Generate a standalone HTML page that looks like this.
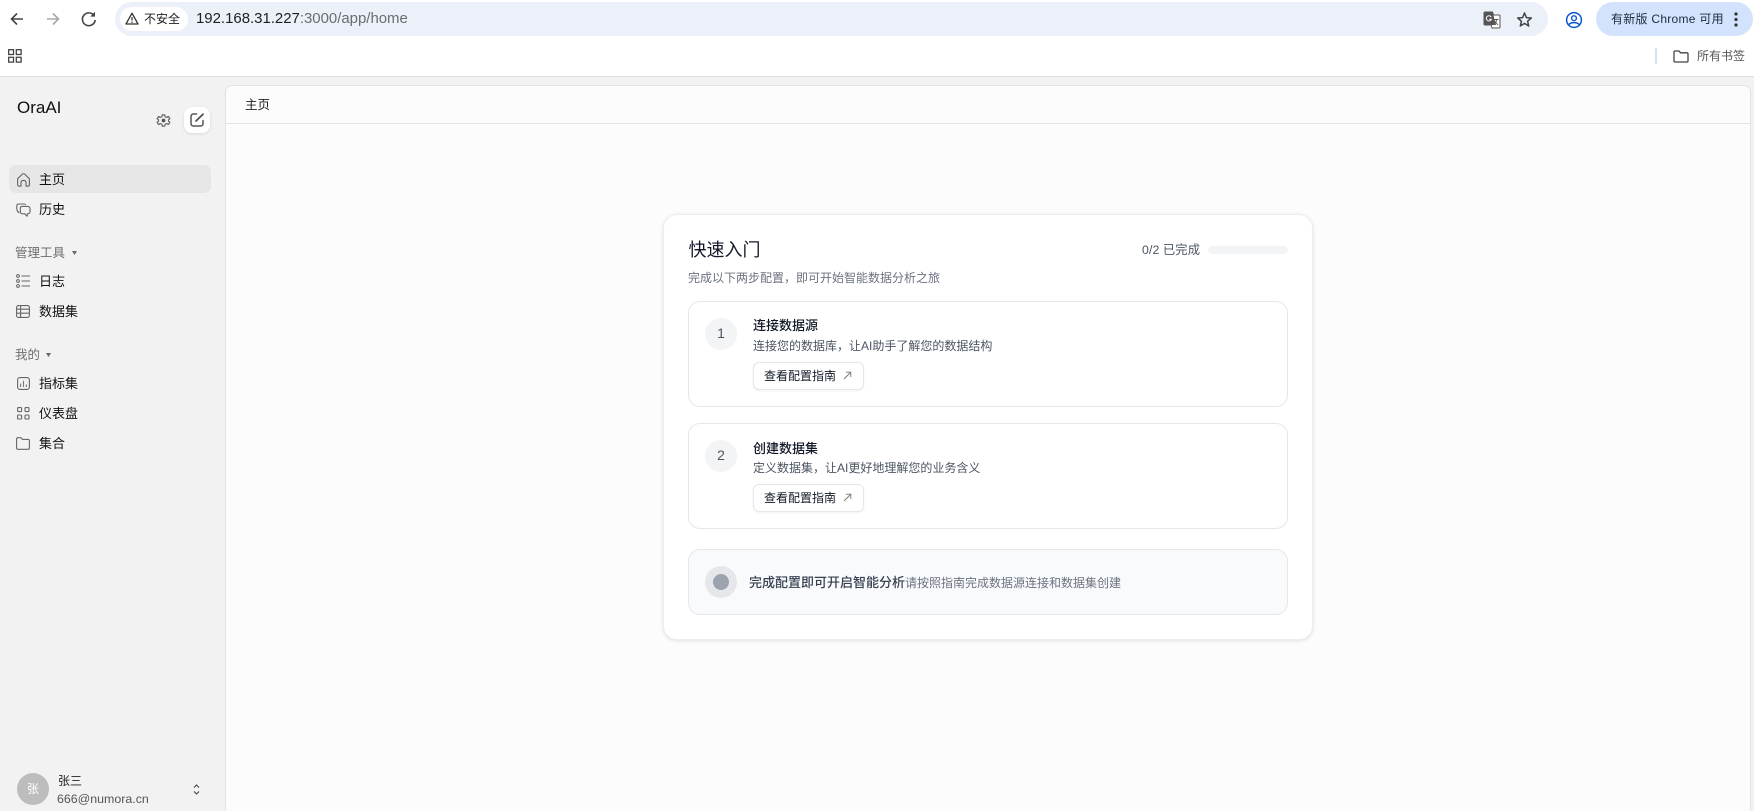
<!DOCTYPE html>
<html lang="zh">
<head>
<meta charset="utf-8">
<title>OraAI</title>
<style>
html,body{margin:0;padding:0;width:1754px;height:811px;overflow:hidden;background:#f2f2f2;font-family:"Liberation Sans","Noto Sans CJK SC",sans-serif;}
#root{position:relative;width:1754px;height:811px;overflow:hidden;background:#f2f2f2;}
.a{position:absolute;box-sizing:border-box;}
.t{position:absolute;white-space:nowrap;line-height:20px;height:20px;}
svg{position:absolute;overflow:visible;fill:none;}
.nav{font-size:13px;color:#111;left:39px;}
.grp{font-size:12.5px;color:#6f6f6f;left:15px;}
.step{left:688px;width:600px;height:106px;background:#fff;border:1px solid #e5e7eb;border-radius:12px;}
.num{left:705px;width:32px;height:32px;border-radius:50%;background:#f3f4f6;color:#4b5563;font-size:14px;line-height:30px;text-align:center;}
.st{left:753px;font-size:13px;color:#111827;font-weight:500;}
.sd{left:753px;font-size:12px;color:#4b5563;}
.btn{left:753px;width:111px;height:28px;background:#fff;border:1px solid #e5e7eb;border-radius:6px;box-shadow:0 1px 2px rgba(0,0,0,.05);}
.bt{left:764px;font-size:12px;color:#111827;}
</style>
</head>
<body>
<div id="root">
<!-- browser chrome -->
<div class="a" style="left:0;top:0;width:1754px;height:76px;background:#fff;"></div>
<div class="a" style="left:0;top:76px;width:1754px;height:1px;background:#dfdfdf;"></div>
<svg style="left:0;top:0" width="120" height="40" viewBox="0 0 120 40">
<path d="M23 19H12M17 13.5L11.5 19L17 24.5" stroke="#444" stroke-width="1.6"/>
<path d="M47 19H58M53 13.5L58.5 19L53 24.5" stroke="#a8a8a8" stroke-width="1.6"/>
<path d="M94 15.5A6.4 6.4 0 1 0 95.2 20" stroke="#444" stroke-width="1.6"/>
<path d="M95 11.8V16.6H90.2Z" fill="#444"/>
</svg>
<div class="a" style="left:115px;top:2px;width:1433px;height:34px;border-radius:17px;background:#ebf0f9;"></div>
<div class="a" style="left:120px;top:7px;width:68px;height:24px;border-radius:12px;background:#fff;"></div>
<svg style="left:125px;top:12px" width="14" height="14" viewBox="0 0 14 14"><path d="M7 1.2L13 12H1Z" stroke="#333" stroke-width="1.3" stroke-linejoin="round"/><path d="M7 5V8.6M7 9.6V11" stroke="#333" stroke-width="1.2"/></svg>
<div class="t" style="left:144px;top:9px;font-size:12px;color:#222;">不安全</div>
<div class="t" style="left:196px;top:9px;font-size:14.95px;color:#6a6c70;"><span style="color:#1f1f1f">192.168.31.227</span>:3000/app/home</div>
<!-- translate -->
<svg style="left:1483px;top:11px" width="18" height="18" viewBox="0 0 18 18"><path d="M2 1H9.5L10.5 4H16C16.6 4 17 4.4 17 5V16C17 16.6 16.6 17 16 17H9L8.3 14H2C1.4 14 1 13.6 1 13V2C1 1.4 1.4 1 2 1Z" fill="#fff" stroke="#555" stroke-width="1"/><path d="M2 1H9.5L13 14H2C1.4 14 1 13.6 1 13V2C1 1.4 1.4 1 2 1Z" fill="#555"/><path d="M8.2 6A2.6 2.6 0 1 0 8.4 8.2H6.4" stroke="#fff" stroke-width="1"/><path d="M11.5 8.5H15.5M13.5 8.5C13.3 11 12.5 12.6 11 13.5M12 10.5L15 14" stroke="#555" stroke-width=".9"/></svg>
<svg style="left:1516px;top:11px" width="17" height="17" viewBox="0 0 17 17"><path d="M8.5 2L10.4 6.6L15.3 7L11.6 10.2L12.7 15L8.5 12.4L4.3 15L5.4 10.2L1.7 7L6.6 6.6Z" stroke="#444" stroke-width="1.5" stroke-linejoin="round"/></svg>
<svg style="left:1565px;top:11px" width="18" height="18" viewBox="0 0 18 18"><circle cx="9" cy="9" r="7.4" stroke="#0b57d0" stroke-width="1.5"/><circle cx="9" cy="7.2" r="2.4" stroke="#0b57d0" stroke-width="1.4"/><path d="M3.8 13.6C6 11 12 11 14.2 13.6" stroke="#0b57d0" stroke-width="1.5"/></svg>
<div class="a" style="left:1596px;top:2px;width:157px;height:34px;border-radius:17px;background:#d3e3fd;"></div>
<div class="t" style="left:1611px;top:9px;font-size:12px;letter-spacing:.27px;color:#1f2a3c;">有新版 Chrome 可用</div>
<svg style="left:1732px;top:11px" width="8" height="16" viewBox="0 0 8 16"><circle cx="4" cy="3" r="1.6" fill="#333"/><circle cx="4" cy="8.5" r="1.6" fill="#333"/><circle cx="4" cy="14" r="1.6" fill="#333"/></svg>
<!-- bookmarks -->
<svg style="left:8px;top:49px" width="14" height="14" viewBox="0 0 14 14"><g stroke="#444" stroke-width="1.3"><rect x=".7" y=".7" width="4.8" height="4.8"/><rect x="8.3" y=".7" width="4.8" height="4.8"/><rect x=".7" y="8.3" width="4.8" height="4.8"/><rect x="8.3" y="8.3" width="4.8" height="4.8"/></g></svg>
<div class="a" style="left:1655px;top:48px;width:2px;height:16px;background:#d3e3fd;"></div>
<svg style="left:1673px;top:50px" width="16" height="13" viewBox="0 0 16 13"><path d="M1 2.2C1 1.4 1.4 1 2.2 1H6L7.6 2.8H14C14.7 2.8 15 3.2 15 3.9V11C15 11.7 14.6 12 14 12H2C1.4 12 1 11.7 1 11Z" stroke="#444" stroke-width="1.3"/></svg>
<div class="t" style="left:1697px;top:46px;font-size:12px;color:#555;">所有书签</div>

<!-- sidebar -->
<div class="t" style="left:17px;top:98px;font-size:17px;color:#111;">OraAI</div>
<svg style="left:155.5px;top:112.5px" width="15" height="15" viewBox="0 0 24 24"><path d="M10 2h4l.6 3 2.5 1.1 2.7-1.6 2.4 3.5-2.2 2v2l2.2 2-2.4 3.5-2.7-1.6-2.5 1.1-.6 3h-4l-.6-3-2.5-1.1-2.7 1.6L1.8 14l2.2-2v-2l-2.2-2 2.4-3.5 2.7 1.6 2.5-1.1z" transform="translate(0 1)" stroke="#666" stroke-width="1.9" stroke-linejoin="round"/><circle cx="12" cy="12" r="3" fill="#555"/></svg>
<div class="a" style="left:184px;top:107px;width:26px;height:26px;border-radius:8px;background:#fff;box-shadow:0 1px 3px rgba(0,0,0,.1);"></div>
<svg style="left:190px;top:113px" width="14" height="14" viewBox="0 0 14 14"><path d="M6.5 1H3.5C2 1 1 2 1 3.5V10.5C1 12 2 13 3.5 13H10.5C12 13 13 12 13 10.5V7.5" stroke="#555" stroke-width="1.5" stroke-linecap="round"/><path d="M6 8L13 1.2" stroke="#555" stroke-width="1.8" stroke-linecap="round"/></svg>
<div class="a" style="left:9px;top:165px;width:202px;height:28px;border-radius:7px;background:#e6e6e6;"></div>
<svg style="left:17px;top:173px" width="13" height="14" viewBox="0 0 13 14"><path d="M.6 5.8L5 1.4C5.9.6 7.1.6 8 1.4L12.4 5.8V11.6C12.4 12.6 11.8 13.2 10.8 13.2H9V9.4C9 8.2 8 7.4 6.5 7.4C5 7.4 4 8.2 4 9.4V13.2H2.2C1.2 13.2.6 12.6.6 11.6Z" stroke="#666" stroke-width="1.1" stroke-linejoin="round"/></svg>
<div class="t nav" style="top:170px;">主页</div>
<svg style="left:16px;top:203px" width="15" height="14" viewBox="0 0 15 14"><path d="M3 8.5L2.6 9.6C1.4 8.6 .8 7.4 .8 5.5V3C.8 1.8 1.6 1 2.8 1H8C9 1 9.4 1.3 9.8 2" stroke="#666" stroke-width="1.1"/><path d="M6 3.4H11.8C13 3.4 14 4.3 14 5.5V8.8C14 10 13 10.8 11.8 10.8H11.4L11.2 13.2L8.6 10.8H6.4C5.2 10.8 4.4 10 4.4 8.8V5C4.4 4.1 5.1 3.4 6 3.4Z" stroke="#666" stroke-width="1.1" stroke-linejoin="round"/></svg>
<div class="t nav" style="top:200px;">历史</div>
<div class="t grp" style="top:243px;">管理工具</div>
<svg style="left:72px;top:251px" width="5" height="4" viewBox="0 0 5 4"><path d="M0 0H5L2.5 4Z" fill="#666"/></svg>
<svg style="left:16px;top:274px" width="14" height="14" viewBox="0 0 14 14"><g stroke="#666" stroke-width="1"><circle cx="2" cy="2" r="1.4"/><circle cx="2" cy="7" r="1.4"/><circle cx="2" cy="12" r="1.4"/><path d="M5.5 2H14M5.5 7H14M5.5 12H14"/></g></svg>
<div class="t nav" style="top:272px;">日志</div>
<svg style="left:16px;top:305px" width="14" height="13" viewBox="0 0 14 13"><rect x=".6" y=".6" width="12.8" height="11.8" rx="1.8" stroke="#666" stroke-width="1.1"/><path d="M.6 4.2H13.4M.6 8.2H13.4M4.6 .6V12.4" stroke="#666" stroke-width="1.1"/></svg>
<div class="t nav" style="top:302px;">数据集</div>
<div class="t grp" style="top:345px;">我的</div>
<svg style="left:46px;top:353px" width="5" height="4" viewBox="0 0 5 4"><path d="M0 0H5L2.5 4Z" fill="#666"/></svg>
<svg style="left:17px;top:377px" width="13" height="13" viewBox="0 0 13 13"><rect x=".6" y=".6" width="11.8" height="11.8" rx="2.4" stroke="#666" stroke-width="1.1"/><path d="M3.6 6.5V10M6.5 3.8V10M9.4 7.5V10" stroke="#777" stroke-width="1.1"/></svg>
<div class="t nav" style="top:374px;">指标集</div>
<svg style="left:17px;top:407px" width="13" height="13" viewBox="0 0 13 13"><g stroke="#666" stroke-width="1.1"><rect x=".6" y=".6" width="4" height="4" rx=".8"/><rect x="8" y=".6" width="4" height="4" rx=".8"/><rect x=".6" y="8" width="4" height="4" rx=".8"/><rect x="8" y="8" width="4" height="4" rx=".8"/></g></svg>
<div class="t nav" style="top:404px;">仪表盘</div>
<svg style="left:16px;top:437px" width="14" height="13" viewBox="0 0 14 13"><path d="M.6 2C.6 1.2 1.1.7 1.9.7H5L6.4 2.4H12.2C13 2.4 13.4 2.9 13.4 3.6V11C13.4 11.8 13 12.3 12.2 12.3H1.9C1.1 12.3.6 11.8.6 11Z" stroke="#666" stroke-width="1.1" stroke-linejoin="round"/></svg>
<div class="t nav" style="top:434px;">集合</div>
<!-- user -->
<div class="a" style="left:17px;top:773px;width:32px;height:32px;border-radius:50%;background:#bdbdbd;color:#fff;font-size:12px;line-height:32px;text-align:center;">张</div>
<div class="t" style="left:58px;top:771px;font-size:12px;color:#222;">张三</div>
<div class="t" style="left:57px;top:789px;font-size:12.4px;color:#555;">666@numora.cn</div>
<svg style="left:193px;top:784px" width="7" height="11" viewBox="0 0 7 11"><path d="M1 3.5L3.5 1L6 3.5M1 7.5L3.5 10L6 7.5" stroke="#444" stroke-width="1.1"/></svg>

<!-- main panel -->
<div class="a" style="left:225px;top:85px;width:1526px;height:740px;background:#fcfcfc;border:1px solid #e2e2e2;border-radius:7px;"></div>
<div class="a" style="left:226px;top:123px;width:1524px;height:1px;background:#e4e4e4;"></div>
<div class="t" style="left:245px;top:95px;font-size:12.5px;color:#222;">主页</div>

<!-- card -->
<div class="a" style="left:663px;top:214px;width:650px;height:426px;background:#fff;border:1px solid #eceded;border-radius:14px;box-shadow:0 1px 4px rgba(0,0,0,.11);"></div>
<div class="t" style="left:688.5px;top:240px;font-size:18px;color:#111827;">快速入门</div>
<div class="t" style="left:688px;top:268px;font-size:12px;color:#6b7280;">完成以下两步配置，即可开始智能数据分析之旅</div>
<div class="t" style="left:1142px;top:240px;font-size:12.3px;letter-spacing:.1px;color:#4b5563;">0/2 已完成</div>
<div class="a" style="left:1208px;top:246px;width:80px;height:8px;border-radius:4px;background:#f3f4f6;"></div>

<div class="a step" style="top:301px;"></div>
<div class="a num" style="top:318px;">1</div>
<div class="t st" style="top:316px;">连接数据源</div>
<div class="t sd" style="top:336px;">连接您的数据库，让AI助手了解您的数据结构</div>
<div class="a btn" style="top:362px;"></div>
<div class="t bt" style="top:366px;">查看配置指南</div>
<svg style="left:843px;top:371px" width="9" height="9" viewBox="0 0 9 9"><path d="M1 8L8 1M3 1.2H7.8V6" stroke="#777" stroke-width=".9"/></svg>

<div class="a step" style="top:423px;"></div>
<div class="a num" style="top:440px;">2</div>
<div class="t st" style="top:439px;">创建数据集</div>
<div class="t sd" style="top:458px;">定义数据集，让AI更好地理解您的业务含义</div>
<div class="a btn" style="top:484px;"></div>
<div class="t bt" style="top:488px;">查看配置指南</div>
<svg style="left:843px;top:493px" width="9" height="9" viewBox="0 0 9 9"><path d="M1 8L8 1M3 1.2H7.8V6" stroke="#777" stroke-width=".9"/></svg>

<div class="a" style="left:688px;top:549px;width:600px;height:66px;background:#f9fafb;border:1px solid #e5e7eb;border-radius:12px;"></div>
<div class="a" style="left:705px;top:566px;width:32px;height:32px;border-radius:50%;background:#e5e7eb;"></div>
<div class="a" style="left:713px;top:574px;width:16px;height:16px;border-radius:50%;background:#9ca3af;"></div>
<div class="t" style="left:749px;top:573px;font-size:13px;font-weight:500;color:#374151;">完成配置即可开启智能分析<span style="font-size:12px;font-weight:400;color:#6b7280;">请按照指南完成数据源连接和数据集创建</span></div>
</div>
</body>
</html>
